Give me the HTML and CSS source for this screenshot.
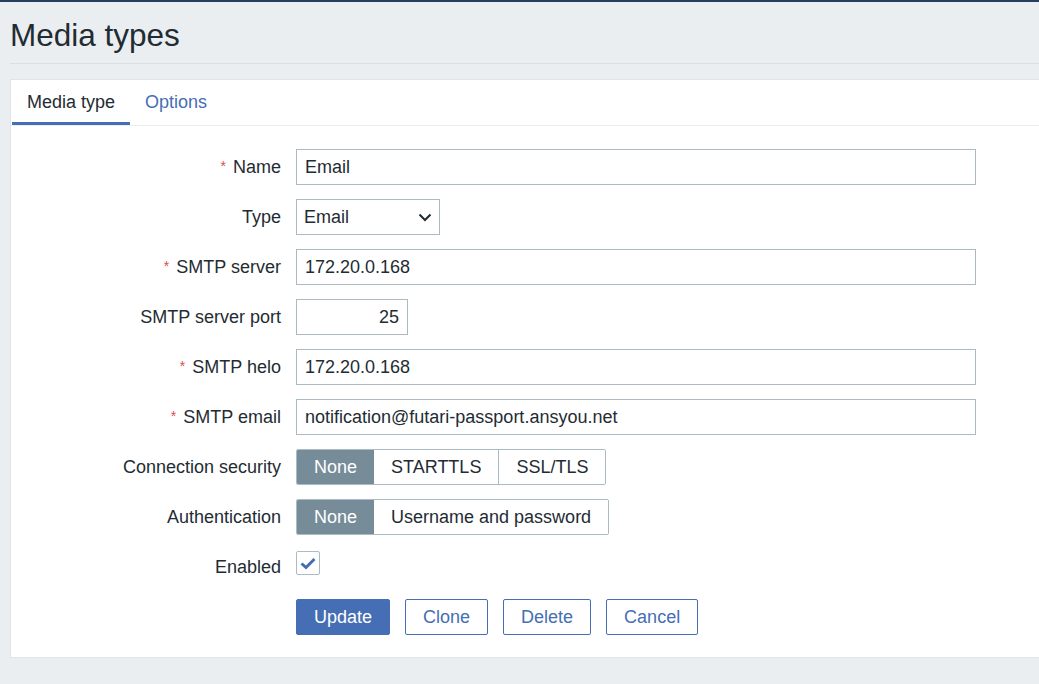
FILE: index.html
```html
<!DOCTYPE html>
<html lang="en">
<head>
<meta charset="utf-8">
<title>Media types</title>
<link rel="stylesheet" href="styles.css">
</head>
<body>
<div class="topline"></div>
<header class="page-header">
  <h1 class="page-title">Media types</h1>
</header>
<main class="card">
  <nav class="tabs">
    <span class="tab tab-active">Media type</span>
    <a class="tab" href="#">Options</a>
  </nav>
  <form class="form-grid">
    <label class="label"><span class="req">*</span>Name</label>
    <div class="field"><input class="input input-wide" type="text" value="Email"></div>

    <label class="label">Type</label>
    <div class="field">
      <div class="select">
        <span>Email</span>
        <svg class="chev" width="14" height="9" viewBox="0 0 14 9"><path d="M1.5 1.5 L7 7 L12.5 1.5" fill="none" stroke="#1f2c33" stroke-width="2"/></svg>
      </div>
    </div>

    <label class="label"><span class="req">*</span>SMTP server</label>
    <div class="field"><input class="input input-wide" type="text" value="172.20.0.168"></div>

    <label class="label">SMTP server port</label>
    <div class="field"><input class="input input-port" type="text" value="25"></div>

    <label class="label"><span class="req">*</span>SMTP helo</label>
    <div class="field"><input class="input input-wide" type="text" value="172.20.0.168"></div>

    <label class="label"><span class="req">*</span>SMTP email</label>
    <div class="field"><input class="input input-wide" type="text" value="notification@futari-passport.ansyou.net"></div>

    <label class="label">Connection security</label>
    <div class="field">
      <div class="segmented">
        <span class="seg seg-on">None</span>
        <span class="seg">STARTTLS</span>
        <span class="seg">SSL/TLS</span>
      </div>
    </div>

    <label class="label">Authentication</label>
    <div class="field">
      <div class="segmented">
        <span class="seg seg-on">None</span>
        <span class="seg">Username and password</span>
      </div>
    </div>

    <label class="label">Enabled</label>
    <div class="field field-check">
      <span class="checkbox">
        <svg width="16" height="13" viewBox="0 0 16 13"><path d="M1.5 6.5 L6 10.5 L14.5 2" fill="none" stroke="#456eb4" stroke-width="3"/></svg>
      </span>
    </div>

    <div></div>
    <div class="field buttons">
      <button type="button" class="btn btn-primary">Update</button>
      <button type="button" class="btn btn-alt">Clone</button>
      <button type="button" class="btn btn-alt">Delete</button>
      <button type="button" class="btn btn-alt">Cancel</button>
    </div>
  </form>
</main>
</body>
</html>
```

FILE: styles.css
```css
html, body {
  margin: 0;
  padding: 0;
}
body {
  background: #ebeef0;
  color: #1f2c33;
  font-family: "Liberation Sans", Arial, sans-serif;
  font-size: 18px;
  overflow: hidden;
}
.topline {
  height: 2px;
  background: #283d5e;
}
.page-header {
  margin-left: 10px;
  padding: 16px 0 10px;
  border-bottom: 1px solid #dcdfe2;
}
.page-title {
  margin: 0;
  font-size: 31.5px;
  line-height: 35px;
  font-weight: normal;
  color: #1f2c33;
}
.card {
  margin: 15px 0 0 10px;
  background: #ffffff;
  border: 1px solid #dfe4e7;
  border-right: none;
  padding-bottom: 22px;
}
.tabs {
  display: flex;
  padding-left: 1px;
  border-bottom: 1px solid #ebeef0;
}
.tab {
  display: block;
  padding: 12px 15px 10px;
  line-height: 20px;
  border-bottom: 3px solid transparent;
  color: #456eb4;
  text-decoration: none;
}
.tab-active {
  color: #1f2c33;
  border-bottom-color: #456eb4;
}
.form-grid {
  display: grid;
  grid-template-columns: 270px 1fr;
  column-gap: 15px;
  row-gap: 14px;
  padding-top: 23px;
  margin: 0;
}
.label {
  height: 36px;
  display: flex;
  align-items: center;
  justify-content: flex-end;
  white-space: nowrap;
}
.req {
  color: #d64e4e;
  font-size: 14px;
  margin-right: 7px;
  align-self: flex-start;
  margin-top: 9px;
}
.field {
  height: 36px;
  display: flex;
  align-items: center;
}
.input {
  box-sizing: border-box;
  height: 36px;
  border: 1px solid #acbbc2;
  border-radius: 0;
  padding: 0 8px 0 8px;
  font-family: inherit;
  font-size: 18px;
  color: #1f2c33;
  background: #ffffff;
  outline: none;
}
.input-wide {
  width: 680px;
}
.input-port {
  width: 112px;
  text-align: right;
}
.select {
  box-sizing: border-box;
  width: 144px;
  height: 36px;
  border: 1px solid #acbbc2;
  display: flex;
  align-items: center;
  justify-content: space-between;
  padding: 0 7px 0 7px;
}
.chev {
  display: block;
}
.segmented {
  display: flex;
  height: 36px;
  box-sizing: border-box;
  border: 1px solid #acbbc2;
  border-radius: 2px;
  overflow: hidden;
}
.seg {
  display: flex;
  align-items: center;
  padding: 0 17px;
  border-left: 1px solid #acbbc2;
  color: #1f2c33;
  background: #ffffff;
}
.seg:first-child {
  border-left: none;
}
.seg-on {
  background: #768d99;
  color: #ffffff;
}
.seg-on + .seg {
  border-left: none;
}
.field-check {
  align-items: flex-start;
}
.checkbox {
  box-sizing: border-box;
  width: 24px;
  height: 24px;
  margin-top: 2px;
  border: 1px solid #acbbc2;
  border-radius: 2px;
  display: flex;
  align-items: center;
  justify-content: center;
  background: #ffffff;
}
.checkbox svg {
  display: block;
}
.buttons {
  gap: 15px;
}
.btn {
  box-sizing: border-box;
  height: 36px;
  padding: 0 17px;
  font-family: inherit;
  font-size: 18px;
  border-radius: 2px;
  border: 1px solid #456eb4;
  cursor: pointer;
}
.btn-primary {
  background: #456eb4;
  color: #ffffff;
}
.btn-alt {
  background: #ffffff;
  color: #456eb4;
}
```
